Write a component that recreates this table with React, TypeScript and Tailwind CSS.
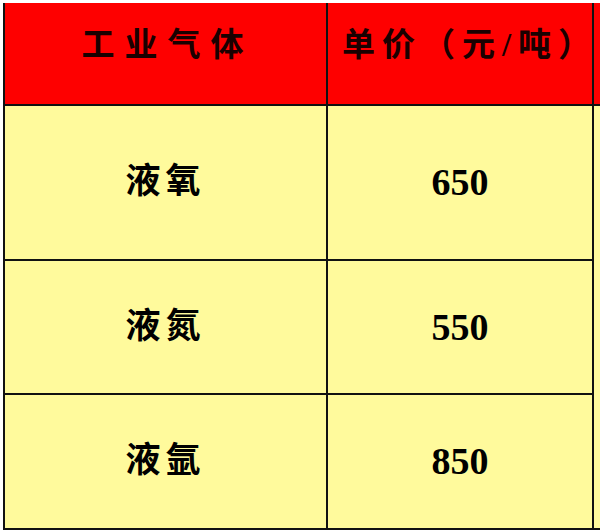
const rows = [
  { gas: "液氧", price: "650" },
  { gas: "液氮", price: "550" },
  { gas: "液氩", price: "850" },
];

const cjk = "font-['Liberation_Serif','Noto_Sans_CJK_SC',serif]";

const App = () => (
  <div className="w-[600px] h-[530px] bg-white pt-[3px] pl-[3px] overflow-hidden">
    <div className="grid grid-cols-[321px_264px_1fr] grid-rows-[101px_153px_132px_133px] gap-[2px] bg-[#111] border-l-2 border-b-2 border-[#111] h-[527px]">
      <div className={`bg-[#fe0000] flex items-center justify-center pb-[16px] pl-[4px] text-[33px] font-semibold tracking-[10px] text-[#1a0000] whitespace-nowrap ${cjk}`}>
        工业气体
      </div>
      <div className={`bg-[#fe0000] flex items-center justify-center pb-[16px] pl-[20px] text-[33px] font-semibold tracking-[7px] text-[#1a0000] whitespace-nowrap ${cjk}`}>
        单价（元/吨）
      </div>
      <div className="bg-[#fe0000]" />
      {rows.map((r, i) => (
        <div key={r.gas} className="contents">
          <div className={`bg-[#fffa9c] flex items-center justify-center text-[35px] font-bold tracking-[5px] text-black ${cjk}`}>
            {r.gas}
          </div>
          <div className="bg-[#fffa9c] flex items-center justify-center text-[38px] font-bold text-black font-['Liberation_Serif',serif]">
            {r.price}
          </div>
          {i === 0 && <div className="bg-[#fffa9c] row-span-3" />}
        </div>
      ))}
    </div>
  </div>
);

export default App;
